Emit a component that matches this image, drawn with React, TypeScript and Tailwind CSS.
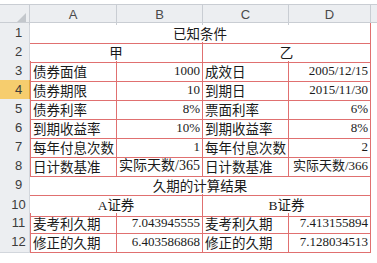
import React from "react";

const RED = "border-[#e07070]";
const CJK = "font-['Noto_Sans_CJK_SC','Noto_Sans',sans-serif]";
const SERIF = "font-['Liberation_Serif','Noto_Sans_CJK_SC',serif]";
const SANS = "font-['Liberation_Sans',Arial,sans-serif]";

function RowNum({ n, active }: { n: number; active?: boolean }) {
  return (
    <div
      className={`flex items-center justify-center pl-[8px] text-[13px] text-[#3c3c3c] border-b border-r ${SANS} ${
        active ? "bg-[#f6cd6e] border-[#e0a93c]" : "bg-[#eceef1] border-[#d2d6dc]"
      }`}
    >
      {n}
    </div>
  );
}

function Label({ t, left }: { t: string; left?: boolean }) {
  return (
    <div
      className={`flex items-center pl-[2px] text-[13.5px] text-[#1a1a1a] border-b border-r ${RED} ${CJK} ${left ? "border-l" : ""} whitespace-nowrap overflow-hidden`}
    >
      {t}
    </div>
  );
}

function Val({ t, big }: { t: string; big?: boolean }) {
  return (
    <div
      className={`flex items-center justify-end pr-[2px] ${big ? "text-[14px]" : "text-[13px]"} text-[#1a1a1a] border-b border-r ${RED} ${SERIF} whitespace-nowrap overflow-hidden`}
    >
      {t}
    </div>
  );
}

const gridCls = "grid grid-cols-[30px_87px_86px_86px_82px_6px] h-[19px]";

function DataRow({ n, a, b, c, d, active, big }: { n: number; a: string; b: string; c: string; d: string; active?: boolean; big?: boolean }) {
  return (
    <div className={gridCls}>
      <RowNum n={n} active={active} />
      <Label t={a} left />
      <Val t={b} big={big} />
      <Label t={c} />
      <Val t={d} />
      <div />
    </div>
  );
}

function TitleRow({ n, t }: { n: number; t: string }) {
  return (
    <div className={gridCls}>
      <RowNum n={n} />
      <div
        className={`col-span-4 flex items-center justify-center text-[13.5px] text-[#1a1a1a] border-b border-r ${RED} ${CJK}`}
      >
        {t}
      </div>
      <div />
    </div>
  );
}

function HalfRow({ n, a, c }: { n: number; a: React.ReactNode; c: React.ReactNode }) {
  return (
    <div className={gridCls}>
      <RowNum n={n} />
      <div
        className={`col-span-2 flex items-center justify-center text-[13.5px] text-[#1a1a1a] border-b border-r ${RED} ${SERIF}`}
      >
        {a}
      </div>
      <div
        className={`col-span-2 flex items-center justify-center text-[13.5px] text-[#1a1a1a] border-b border-r ${RED} ${SERIF}`}
      >
        {c}
      </div>
      <div />
    </div>
  );
}

export default function App() {
  const headers = ["A", "B", "C", "D"];
  return (
    <div className="w-[377px] h-[263px] bg-white pt-[4px] overflow-hidden">
      <div className="grid grid-cols-[30px_87px_86px_86px_82px_6px] h-[19px] bg-[#eceef1] border-t border-b border-[#c9cdd3]">
        <div className="relative border-r border-[#c9cdd3]">
          <svg className="absolute right-[3px] bottom-[3px]" width="9" height="9" viewBox="0 0 9 9">
            <polygon points="9,0 9,9 0,9" fill="#c3c7cc" />
          </svg>
        </div>
        {headers.map((h) => (
          <div
            key={h}
            className={`flex items-center justify-center text-[13px] text-[#4a4a4a] border-r border-[#c9cdd3] ${SANS}`}
          >
            {h}
          </div>
        ))}
        <div />
      </div>
      <TitleRow n={1} t="已知条件" />
      <HalfRow n={2} a={<span className={CJK}>甲</span>} c={<span className={CJK}>乙</span>} />
      <DataRow n={3} a="债券面值" b="1000" c="成效日" d="2005/12/15" />
      <DataRow n={4} a="债券期限" b="10" c="到期日" d="2015/11/30" active />
      <DataRow n={5} a="债券利率" b="8%" c="票面利率" d="6%" />
      <DataRow n={6} a="到期收益率" b="10%" c="到期收益率" d="8%" />
      <DataRow n={7} a="每年付息次数" b="1" c="每年付息次数" d="2" />
      <DataRow n={8} a="日计数基准" b="实际天数/365" c="日计数基准" d="实际天数/366" big />
      <TitleRow n={9} t="久期的计算结果" />
      <HalfRow
        n={10}
        a={<span>A<span className={CJK}>证券</span></span>}
        c={<span>B<span className={CJK}>证券</span></span>}
      />
      <DataRow n={11} a="麦考利久期" b="7.043945555" c="麦考利久期" d="7.413155894" />
      <DataRow n={12} a="修正的久期" b="6.403586868" c="修正的久期" d="7.128034513" />
    </div>
  );
}
